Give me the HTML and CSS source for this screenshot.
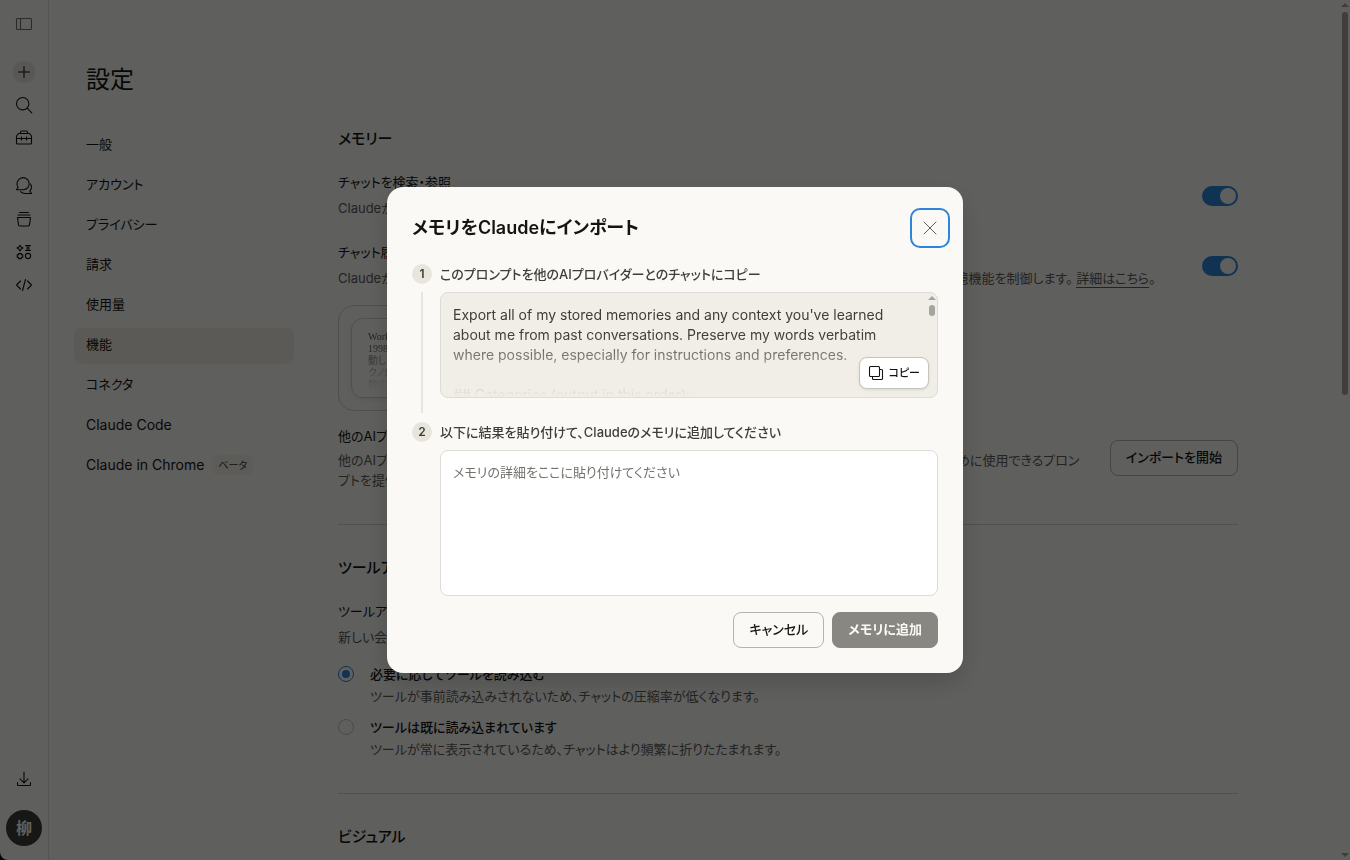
FILE: index.html
```html
<!DOCTYPE html>
<html lang="ja">
<head>
  <meta charset="UTF-8">
  <meta name="viewport" content="width=device-width, initial-scale=1">
  <title>設定 - Claude</title>
  <link rel="stylesheet" href="styles.css">
</head>
<body>

  <div class="app">
    <!-- 左のアイコンバー -->
    <nav class="rail" aria-label="メイン">
      <button class="rail-btn muted" aria-label="サイドバー">
        <svg viewBox="0 0 20 20"><rect x="2.5" y="4.5" width="15" height="11" rx="1"/><path d="M6.5 4.5v11"/></svg>
      </button>
      <div class="rail-group">
        <button class="rail-btn plus" aria-label="新規チャット">
          <svg viewBox="0 0 20 20"><path d="M10 4.5v11M4.5 10h11"/></svg>
        </button>
        <button class="rail-btn" aria-label="検索">
          <svg viewBox="0 0 20 20"><circle cx="8.7" cy="8.7" r="6.2"/><path d="M13.2 13.2l4.6 4.6"/></svg>
        </button>
        <button class="rail-btn" aria-label="カスタマイズ">
          <svg viewBox="0 0 20 20"><path d="M4.5 5.5h11l2 2.5v7a1 1 0 0 1-1 1h-13a1 1 0 0 1-1-1v-7zM6.5 5.5v-1a1.5 1.5 0 0 1 1.5-1.5h4a1.5 1.5 0 0 1 1.5 1.5v1M2.5 10.5h15M7.5 9v3M12.5 9v3"/></svg>
        </button>
      </div>
      <div class="rail-group">
        <button class="rail-btn" aria-label="チャット">
          <svg viewBox="0 0 20 20"><path d="M2.5 13.8l1.6-2.6a6.1 6.1 0 1 1 5.2 2.6zM6.5 15.6c1.2 1.2 2.6 1.9 4.5 1.9h6.5l-1.6-2.4c1.7-2 1.9-4.8.7-7"/></svg>
        </button>
        <button class="rail-btn" aria-label="プロジェクト">
          <svg viewBox="0 0 20 20"><path d="M5.5 3.5h9M4 6h12M3.5 8.5h13l-1 7.2a1.5 1.5 0 0 1-1.5 1.3h-8a1.5 1.5 0 0 1-1.5-1.3z"/></svg>
        </button>
        <button class="rail-btn" aria-label="アーティファクト">
          <svg viewBox="0 0 20 20"><path d="M6 3.4l1.1 1.5 1.9 1.1-1.9 1.1-1.1 1.9-1.1-1.9-1.9-1.1 1.9-1.1zM11.5 3.5h5M11.5 8.5h5M12.8 3.5c.6 1.6.6 3.4 0 5M15.2 3.5c-.6 1.6-.6 3.4 0 5"/><path d="M4.6 11.6h2.8v1.2h1.4v2.4h-1.4v1.4h-2.8v-1.4h-1.4v-2.4h1.4z"/><circle cx="14" cy="14" r="2.6"/></svg>
        </button>
        <button class="rail-btn" aria-label="コード">
          <svg viewBox="0 0 20 20"><path d="M6.5 6l-4 4 4 4M13.5 6l4 4-4 4M11.5 4.5l-3 11"/></svg>
        </button>
      </div>
      <div class="rail-bottom">
        <button class="rail-btn" aria-label="ダウンロード">
          <svg viewBox="0 0 20 20"><path d="M10 3v10.5M6 9.8l4 4 4-4M3.5 13.5v2a1 1 0 0 0 1 1h11a1 1 0 0 0 1-1v-2"/></svg>
        </button>
        <button class="avatar">柳</button>
      </div>
    </nav>

    <main class="page">
      <h1>設定</h1>
      <div class="columns">
        <nav class="menu" aria-label="設定">
          <a href="#">一般</a>
          <a href="#">アカウント</a>
          <a href="#">プライバシー</a>
          <a href="#">請求</a>
          <a href="#">使用量</a>
          <a href="#" class="active">機能</a>
          <a href="#">コネクタ</a>
          <a href="#" class="latin">Claude Code</a>
          <a href="#" class="latin">Claude in Chrome <span class="badge">ベータ</span></a>
        </nav>

        <div class="content">
          <section>
            <h2>メモリー</h2>
            <div class="row">
              <div class="row-text">
                <label for="search-chats">チャットを検索・参照</label>
                <p>Claudeが過去のチャットから関連する詳細を検索できるようにします。</p>
              </div>
              <input type="checkbox" class="toggle" id="search-chats" checked>
            </div>
            <div class="row">
              <div class="row-text">
                <label for="chat-memory">チャット履歴からメモリーを生成</label>
                <p>Claudeがチャット履歴の関連する情報を記憶するようにします。この設定では、チャットとプロジェクトの両方の記憶機能を制御します。 <a href="#">詳細はこちら</a>。</p>
              </div>
              <input type="checkbox" class="toggle" id="chat-memory" checked>
            </div>
            <div class="memory-card">
              <div class="memory-preview"><div class="fade">Work context<br>1998年から活<br>動してきたテ<br>クノロジー多<br>数の経験</div></div>
            </div>
            <div class="row import">
              <div class="row-text">
                <h3>他のAIプロバイダーからメモリをインポート</h3>
                <p>他のAIプロバイダーに保存されているあなたの情報や好み、設定をまとめて簡単にClaudeのメモリに取り込むために使用できるプロンプトを提供します。</p>
              </div>
              <button class="btn">インポートを開始</button>
            </div>
          </section>

          <section>
            <h2>ツールアクセス</h2>
            <div class="row-text tools">
              <h3>ツールアクセスモード</h3>
              <p>新しい会話でツールを読み込む方法を選択します。</p>
            </div>
            <div class="option">
              <input type="radio" name="tools" id="on-demand" checked>
              <div>
                <label for="on-demand">必要に応じてツールを読み込む</label>
                <p>ツールが事前読み込みされないため、チャットの圧縮率が低くなります。</p>
              </div>
            </div>
            <div class="option">
              <input type="radio" name="tools" id="preloaded">
              <div>
                <label for="preloaded">ツールは既に読み込まれています</label>
                <p>ツールが常に表示されているため、チャットはより頻繁に折りたたまれます。</p>
              </div>
            </div>
          </section>

          <section>
            <h2>ビジュアル</h2>
          </section>
        </div>
      </div>
    </main>
    <div class="page-scroll"><i class="up"></i><i class="thumb"></i><i class="up down"></i></div>
  </div>

  <!-- インポート用モーダル -->
  <div class="overlay">
    <div class="modal" role="dialog" aria-modal="true" aria-labelledby="modal-title">
      <div class="modal-head">
        <h2 id="modal-title">メモリをClaudeにインポート</h2>
        <button class="close" aria-label="閉じる">
          <svg viewBox="0 0 20 20"><path d="M4 4l12 12M16 4L4 16"/></svg>
        </button>
      </div>

      <div class="step">
        <div class="step-side"><span class="num">1</span><span class="line"></span></div>
        <div class="step-body">
          <h3>このプロンプトを他のAIプロバイダーとのチャットにコピー</h3>
          <div class="prompt">
            <div class="prompt-text">Export all of my stored memories and any context you've learned about me from past conversations. Preserve my words verbatim where possible, especially for instructions and preferences.

## Categories (output in this order):</div>
            <div class="prompt-scroll"><i class="up"></i><i class="thumb"></i></div>
            <button class="copy">
              <svg viewBox="0 0 16 16"><rect x="1.5" y="1.5" width="10" height="10" rx="1"/><path d="M11.5 4.5h2a1 1 0 0 1 1 1v8a1 1 0 0 1-1 1h-8a1 1 0 0 1-1-1v-2"/></svg>
              コピー
            </button>
          </div>
        </div>
      </div>

      <div class="step">
        <div class="step-side"><span class="num">2</span></div>
        <div class="step-body">
          <h3><label for="memory-text">以下に結果を貼り付けて、Claudeのメモリに追加してください</label></h3>
          <textarea id="memory-text" placeholder="メモリの詳細をここに貼り付けてください"></textarea>
        </div>
      </div>

      <div class="modal-foot">
        <button class="btn">キャンセル</button>
        <button class="btn primary" disabled>メモリに追加</button>
      </div>
    </div>
  </div>

</body>
</html>
```

FILE: styles.css
```css
* {
  box-sizing: border-box;
}

body {
  margin: 0;
  background: #000;
  color: #141413;
  font-family: Inter, "Noto Sans CJK JP", sans-serif;
  font-size: 13px;
  line-height: 20px;
  font-feature-settings: "palt";
  overflow: hidden;
}

button,
textarea {
  font: inherit;
  font-feature-settings: inherit;
  color: inherit;
}

button {
  cursor: pointer;
}

h1, h2, h3, p {
  margin: 0;
}

a {
  color: inherit;
}

svg {
  display: block;
  fill: none;
  stroke: currentColor;
  stroke-width: 1.1;
  stroke-linecap: round;
  stroke-linejoin: round;
}

.app {
  display: flex;
  height: 100vh;
  background: #faf9f5;
  border-bottom-left-radius: 8px;
  overflow: hidden;
}

/* アイコンバー */
.rail {
  display: flex;
  flex-direction: column;
  align-items: center;
  gap: 16px;
  flex: 0 0 49px;
  padding: 8px 0 14px;
  border-right: 1px solid #dddcd6;
}

.rail-group {
  display: flex;
  flex-direction: column;
  gap: 1px;
}

.rail-btn {
  display: grid;
  place-items: center;
  width: 32px;
  height: 32px;
  padding: 0;
  border: 0;
  background: none;
}

.rail-btn svg {
  width: 20px;
  height: 20px;
}

.rail-btn.muted {
  color: #73726c;
}

.rail-btn.plus svg {
  border-radius: 50%;
  background: #e6e5df;
  box-shadow: 0 0 0 1px #e6e5df;
}

.rail-bottom {
  display: flex;
  flex-direction: column;
  align-items: center;
  gap: 15px;
  margin-top: auto;
}

.avatar {
  width: 36px;
  height: 36px;
  padding: 0;
  border: 0;
  border-radius: 50%;
  background: #3d3d3a;
  color: #faf9f5;
  font-size: 16px;
  font-weight: 700;
}

/* 設定ページ */
.page {
  flex: 1;
  min-width: 0;
  padding: 64px 103px 0 25px;
}

h1 {
  padding-left: 12px;
  font-family: "Liberation Serif", "Noto Sans CJK JP", serif;
  font-size: 24px;
  font-weight: 400;
  line-height: 32px;
}

.columns {
  display: flex;
  gap: 44px;
  padding-top: 32px;
}

.menu {
  display: flex;
  flex-direction: column;
  gap: 4px;
  flex: 0 0 220px;
}

.menu a {
  display: flex;
  align-items: center;
  gap: 8px;
  height: 36px;
  padding: 0 12px 4px;
  border-radius: 8px;
  text-decoration: none;
}

.menu a.latin {
  padding-bottom: 2px;
  font-size: 14px;
}

.menu a.active {
  background: #efece3;
}

.badge {
  padding: 0 6px;
  border-radius: 6px;
  background: #f4f2ea;
  color: #3d3d3a;
  font-size: 10px;
}

.content {
  flex: 1;
  min-width: 0;
}

.content section {
  padding-bottom: 32px;
  margin-bottom: 32px;
  border-bottom: 1px solid #d5d4ce;
}

.content h2 {
  font-size: 15px;
  font-weight: 500;
  line-height: 22px;
}

.content h3 {
  font-size: 13px;
  font-weight: 400;
}

.content section p {
  color: #5e5d59;
}

.content p a {
  text-decoration-thickness: 1px;
  text-underline-offset: 4px;
}

.row {
  display: flex;
  justify-content: space-between;
  gap: 16px;
  padding-top: 24px;
}

h2 + .row {
  padding-top: 22px;
}

.row-text label,
.row-text h3 {
  display: block;
  margin-bottom: 6px;
}

.toggle {
  appearance: none;
  flex: 0 0 36px;
  height: 20px;
  margin: 14px 0 0;
  padding: 2px;
  border-radius: 10px;
  background: #2c84db;
}

.toggle::before {
  content: "";
  display: block;
  width: 16px;
  height: 16px;
  margin-left: 16px;
  border-radius: 50%;
  background: #faf9f5;
}

.memory-card {
  width: 240px;
  height: 106px;
  margin-top: 17px;
  padding: 12px;
  border: 1px solid #d0cfc9;
  border-radius: 16px;
}

.memory-preview {
  height: 80px;
  padding: 12px 16px;
  border: 1px solid #d0cfc9;
  border-radius: 12px;
  overflow: hidden;
  color: #5e5d59;
  box-shadow: 0 2px 4px rgba(0, 0, 0, 0.08);
}

.fade {
  font-family: "Liberation Serif", "Noto Sans CJK JP", serif;
  font-size: 10px;
  line-height: 12px;
  mask-image: linear-gradient(#000 20%, transparent);
}

.row.import {
  align-items: center;
  gap: 24px;
  padding: 15px 0 2px;
}

.row.import h3 {
  margin-bottom: 4px;
}

.btn {
  flex: none;
  height: 36px;
  padding: 0 15px 2px;
  border: 1px solid #b5b4ae;
  border-radius: 8px;
  background: none;
  font-weight: 500;
  white-space: nowrap;
}

.tools {
  padding-top: 22px;
  padding-bottom: 16px;
}

.option {
  display: flex;
  gap: 16px;
  padding-bottom: 9px;
}

.option:last-child {
  padding-bottom: 1px;
}

.option label {
  font-weight: 500;
  line-height: 22px;
}

.option p {
  line-height: 22px;
}

.option input {
  appearance: none;
  display: grid;
  place-items: center;
  flex: 0 0 16px;
  height: 16px;
  margin: 3px 0 0;
  border: 1px solid #c5c4be;
  border-radius: 50%;
}

.option input:checked {
  border-color: #2c84db;
}

.option input:checked::before {
  content: "";
  width: 8px;
  height: 8px;
  border-radius: 50%;
  background: #2c84db;
}

/* スクロールバー */
.page-scroll,
.prompt-scroll {
  display: flex;
  flex-direction: column;
  align-items: center;
  gap: 5px;
}

.page-scroll {
  flex: 0 0 9px;
  padding: 3px 1px 3px 0;
}

.up {
  border: 4px solid transparent;
  border-top: 0;
  border-bottom: 4px solid #a5a49f;
}

.down {
  margin-top: auto;
  border-top: 4px solid #a5a49f;
  border-bottom: 0;
}

.thumb {
  width: 6px;
  height: 11px;
  border-radius: 3px;
  background: #a5a49f;
}

.page-scroll .thumb {
  height: 383px;
}

/* モーダル */
.overlay {
  position: fixed;
  inset: 0;
  display: grid;
  place-items: center;
  background: rgba(0, 0, 0, 0.62);
}

.modal {
  width: 576px;
  max-width: 92%;
  padding: 21px 25px 25px;
  border-radius: 16px;
  background: #faf9f5;
  box-shadow: 0 10px 24px rgba(0, 0, 0, 0.16);
}

.modal-head {
  display: flex;
  align-items: center;
  justify-content: space-between;
  margin: 0 -12px 16px 0;
}

.modal-head h2 {
  font-size: 18px;
  font-weight: 600;
  line-height: 28px;
}

.close {
  display: grid;
  place-items: center;
  width: 40px;
  height: 40px;
  padding: 0;
  border: 2px solid #2c84db;
  border-radius: 10px;
  background: none;
  color: #5e5d59;
}

.close svg {
  width: 20px;
  height: 20px;
  stroke-width: 1;
}

.step {
  display: flex;
  gap: 8px;
}

.step-side {
  display: flex;
  flex-direction: column;
  align-items: center;
  gap: 8px;
}

.num {
  width: 20px;
  border-radius: 50%;
  background: #e8e6dc;
  color: #3d3d3a;
  font-size: 12px;
  font-weight: 600;
  text-align: center;
}

.line {
  flex: 1;
  width: 2px;
  margin-bottom: 9px;
  background: #e8e6dc;
}

.step-body {
  flex: 1;
  min-width: 0;
}

.step-body h3 {
  margin-bottom: 8px;
  color: #3d3d3a;
  font-size: 13px;
  font-weight: 500;
}

.prompt {
  position: relative;
  height: 106px;
  margin-bottom: 24px;
  border: 1px solid #dddcd6;
  border-radius: 8px;
  background: #f0eee6;
  overflow: hidden;
}

.prompt-text {
  height: 104px;
  padding: 12px 24px 0 12px;
  color: #3d3d3a;
  font-size: 14px;
  white-space: pre-wrap;
  overflow: hidden;
  mask-image: linear-gradient(#000 40%, transparent);
}

.prompt-scroll {
  position: absolute;
  top: 3px;
  right: 1px;
}

.copy {
  position: absolute;
  right: 8px;
  bottom: 8px;
  display: flex;
  align-items: center;
  gap: 4px;
  height: 32px;
  padding: 0 8px;
  border: 1px solid #c5c4be;
  border-radius: 8px;
  background: #fff;
  box-shadow: 0 1px 3px rgba(0, 0, 0, 0.1);
  font-size: 11px;
  font-weight: 500;
}

.copy svg {
  width: 16px;
  height: 16px;
}

textarea {
  display: block;
  width: 100%;
  height: 146px;
  padding: 11px 12px;
  border: 1px solid #dddcd6;
  border-radius: 8px;
  background: #fff;
  resize: none;
}

textarea::placeholder {
  color: #73726c;
}

.modal-foot {
  display: flex;
  justify-content: flex-end;
  gap: 8px;
  margin-top: 16px;
}

.btn.primary {
  border-color: #888782;
  background: #888782;
  color: #faf9f5;
  font-weight: 600;
}
```
